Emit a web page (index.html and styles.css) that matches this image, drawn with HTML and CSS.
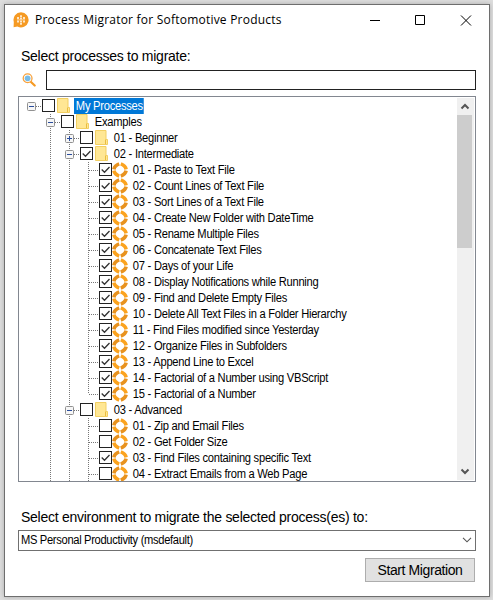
FILE: index.html
```html
<!DOCTYPE html>
<html lang="en">
<head>
<meta charset="utf-8">
<title>Process Migrator for Softomotive Products</title>
<link rel="stylesheet" href="styles.css">
</head>
<body>
<svg width="0" height="0" class="defs">
  <symbol id="folder" viewBox="0 0 13 15"><path d="M.5.5H11V9.5h1.5v5H.5z" fill="#ffe794" stroke="#f2cf62"/><path d="M10.5 14V9.5" stroke="#e9bc3f"/></symbol>
  <symbol id="process" viewBox="0 0 16 16" fill="none" stroke-width="3.6"><path d="M1.9 7.3Q2.6 3.6 7.2 1.9M14.1 8.7Q13.4 12.4 8.8 14.1" stroke="#e8921e"/><path d="M8.8 1.9Q13.4 3.6 14.1 7.3M7.2 14.1Q2.6 12.4 1.9 8.7" stroke="#fba31f"/></symbol>
</svg>
<main class="window">
  <header class="titlebar">
    <svg class="logo" viewBox="0 0 16 16"><path d="M8 .3a7.6 7.6 0 1 1-3.6 14.3L.6 15.3.8 10A7.6 7.6 0 0 1 8 .3z" fill="#f59a23"/><path d="M5 5v2M5 8.5v2M8 3.3v1.6M8 5.6v2M8 8.4v2M8 11.1v1.6M11 5v2M11 8.5v2" stroke="#fff" stroke-width="1.5"/><path d="M4 7.8h8" stroke="#fbd9a8" stroke-width=".8"/></svg>
    <h1 class="title">Process Migrator for Softomotive Products</h1>
    <svg class="controls" viewBox="0 0 102 11" fill="none" stroke="#000"><path d="M0 5.5h10M45.5.5h9v9h-9zM91 .5l10 10M101 .5l-10 10"/></svg>
  </header>
  <label class="label label-top"><span>Select processes to migrate:</span></label>
  <div class="search">
    <svg class="lens" viewBox="0 0 14 14"><path d="M8.5 8.5l4.2 4" stroke="#f59a23" stroke-width="2.2" stroke-linecap="round"/><circle cx="5.6" cy="5.3" r="4.4" fill="#fff" stroke="#f8a13a" stroke-width="1.3"/><circle cx="5.6" cy="5.3" r="2.9" fill="#78bbe6"/></svg>
    <input class="search-input" type="text" aria-label="Search">
  </div>
  <section class="tree">
    <div class="rows" id="rows"></div>
    <div class="scrollbar">
      <svg class="arrow" viewBox="0 0 17 17"><path d="M4.5 10.5l3.5-3.5 3.5 3.5" fill="none" stroke="#555" stroke-width="2"/></svg>
      <div class="thumb"></div>
      <svg class="arrow arrow-down" viewBox="0 0 17 17"><path d="M4.5 6.5l3.5 3.5 3.5-3.5" fill="none" stroke="#555" stroke-width="2"/></svg>
    </div>
  </section>
  <label class="label label-env"><span>Select environment to migrate the selected process(es) to:</span></label>
  <div class="select"><span class="select-text">MS Personal Productivity (msdefault)</span><svg class="chevron" viewBox="0 0 10 6"><path d="M1 .8l4 4 4-4" fill="none" stroke="#555" stroke-width="1.1"/></svg></div>
  <button class="start"><span>Start Migration</span></button>
</main>
<script src="tree.js"></script>
</body>
</html>
```
FILE: styles.css
```css
* { box-sizing: border-box; }
body { margin: 0; padding: 4px 3px 3px 4px; height: 600px; background: #dedede; overflow: hidden; font-family: "Liberation Sans", Arial, sans-serif; color: #000; }
.defs { position: absolute; }
.window { width: 486px; height: 593px; background: #fff; border: 1px solid #6e6e6e; box-shadow: 0 0 5px #aaa; display: flex; flex-direction: column; padding: 0 13px; }
.titlebar { height: 30px; display: flex; align-items: center; margin-left: -5px; }
.logo { width: 16px; height: 16px; margin-right: 6px; }
.title { margin: 0; font: 12px/16px "Open Sans", sans-serif; width: 332px; white-space: nowrap; letter-spacing: .22px; }
.controls { width: 102px; height: 11px; flex: none; margin-left: 3px; }
.label { font-size: 14px; line-height: 18px; margin-left: 3px; white-space: nowrap; letter-spacing: -.26px; }
.label-top { margin-top: 12px; }
.search { display: flex; margin-top: 5px; height: 20px; align-items: center; padding-left: 4px; }
.lens { width: 14px; height: 14px; margin-right: 10px; }
.search-input { width: 430px; height: 20px; border: 1px solid #222; padding: 0; background: #fff; }
.tree { width: 458px; height: 386px; margin-top: 6px; border: 1px solid #828790; display: flex; overflow: hidden; padding: 1px; }
.rows { flex: 1; overflow: hidden; height: 383px; }
.row { display: flex; height: 16px; align-items: flex-start; }
.guide { width: 19px; height: 16px; flex: none; }
.guide.v { background: repeating-linear-gradient(#777 0 1px, transparent 1px 2px) 11px 0 / 1px 16px no-repeat; }
.joint { width: 22px; height: 16px; flex: none; }
.check { width: 13px; height: 13px; margin-top: 1px; flex: none; }
.folder { width: 13px; height: 15px; margin-left: 2px; flex: none; }
.process { width: 16px; height: 16px; flex: none; }
.name { font-size: 12px; line-height: 16px; height: 16px; white-space: nowrap; margin-left: 4px; padding: 0 1px 0 2px; letter-spacing: -.28px; transform: scaleX(.93); transform-origin: 0 0; }
.process + .name { margin-left: 3px; }
.selected { background: #0078d7; color: #fff; }
.scrollbar { width: 17px; background: #f0f0f0; display: flex; flex-direction: column; }
.arrow { width: 17px; height: 17px; flex: none; }
.thumb { height: 133px; width: 15px; background: #cdcdcd; }
.arrow-down { margin-top: auto; }
.label-env { margin-top: 26px; }
.select { width: 458px; height: 21px; margin-top: 4px; border: 1px solid #707070; display: flex; align-items: center; justify-content: space-between; padding: 0 3px 2px 2px; }
.select-text { font-size: 12px; letter-spacing: -.35px; transform: scaleX(.93); transform-origin: 0 0; }
.chevron { width: 10px; height: 6px; }
.start { align-self: flex-end; width: 110px; height: 24px; margin: 7px 1px 0 0; border: 1px solid #adadad; background: #e1e1e1; font: 14px "Liberation Sans", sans-serif; letter-spacing: -.4px; padding: 0; color: #000; white-space: nowrap; }
```
FILE: tree.js
```js
const nodes = [
  [0, "My Processes", "-", 0], [1, "Examples", "-", 0], [2, "01 - Beginner", "+", 0], [2, "02 - Intermediate", "-", 1],
  [3, "01 - Paste to Text File", "", 1], [3, "02 - Count Lines of Text File", "", 1], [3, "03 - Sort Lines of a Text File", "", 1],
  [3, "04 - Create New Folder with DateTime", "", 1], [3, "05 - Rename Multiple Files", "", 1], [3, "06 - Concatenate Text Files", "", 1],
  [3, "07 - Days of your Life", "", 1], [3, "08 - Display Notifications while Running", "", 1], [3, "09 - Find and Delete Empty Files", "", 1],
  [3, "10 - Delete All Text Files in a Folder Hierarchy", "", 1], [3, "11 - Find Files modified since Yesterday", "", 1],
  [3, "12 - Organize Files in Subfolders", "", 1], [3, "13 - Append Line to Excel", "", 1], [3, "14 - Factorial of a Number using VBScript", "", 1],
  [3, "15 - Factorial of a Number", "", 1], [2, "03 - Advanced", "-", 0], [3, "01 - Zip and Email Files", "", 0],
  [3, "02 - Get Folder Size", "", 0], [3, "03 - Find Files containing specific Text", "", 1], [3, "04 - Extract Emails from a Web Page", "", 0]
];
document.getElementById("rows").innerHTML = nodes.map(([level, name, toggle, checked], i) => {
  let guides = "";
  for (let l = 0; l < level; l++) guides += `<span class="guide${l ? " v" : ""}"></span>`;
  const last = i === 18;
  const dots = (level ? `<path d="M11.5 0V${last ? 8 : 16}" stroke="#777" stroke-dasharray="1 1"/>` : "") + `<path d="M12 8.5H22" stroke="#777" stroke-dasharray="1 1"/>`;
  const box = toggle ? `<rect x="7.5" y="4.5" width="8" height="8" rx="1" fill="#f6f6f6" stroke="#919191"/><path d="M9 8.5h5${toggle === "+" ? "M11.5 6v5" : ""}" stroke="#294c9c"/>` : "";
  const tick = checked ? `<path d="M2.7 6.5l2.8 2.8 5-5.3" fill="none" stroke="#333" stroke-width="1.3"/>` : "";
  const icon = level < 3 ? "folder" : "process";
  return `<div class="row">${guides}<svg class="joint" viewBox="0 0 22 16">${dots}${box}</svg>` +
    `<svg class="check" viewBox="0 0 13 13"><rect x=".5" y=".5" width="12" height="12" fill="#fff" stroke="#222"/>${tick}</svg>` +
    `<svg class="${icon}"><use href="#${icon}"/></svg><span class="name${i ? "" : " selected"}">${name}</span></div>`;
}).join("");
```
